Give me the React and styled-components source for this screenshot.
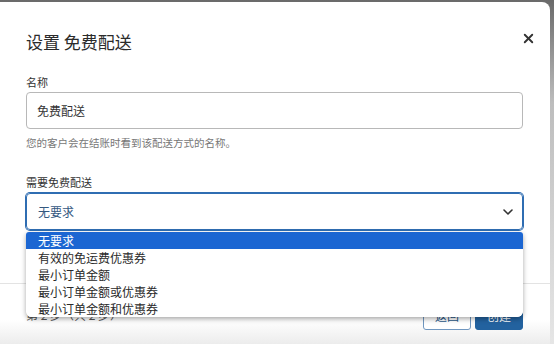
import React, { useState } from 'react';
import styled, { createGlobalStyle } from 'styled-components';
import { X, ChevronDown } from 'lucide-react';

const GlobalStyle = createGlobalStyle`
  body {
    margin: 0;
    background: linear-gradient(180deg, #6a6a6a 0%, #bdbdbd 30%, #e6e6e6 100%);
    font-family: "Noto Sans CJK SC", "Noto Sans", sans-serif;
    overflow: hidden;
  }
`;

const options = ['无要求', '有效的免运费优惠券', '最小订单金额', '最小订单金额或优惠券', '最小订单金额和优惠券'];

const App = () => {
  const [name, setName] = useState('免费配送');
  const [selected] = useState(0);

  return (
    <>
      <GlobalStyle />
      <Modal>
        <Header>
          <Title>设置 免费配送</Title>
          <CloseButton aria-label="关闭">
            <X size={15} strokeWidth={3} />
          </CloseButton>
        </Header>

        <Body>
          <Label>名称</Label>
          <Input value={name} onChange={(e) => setName(e.target.value)} />
          <Help>您的客户会在结账时看到该配送方式的名称。</Help>

          <Label $top={24}>需要免费配送</Label>
          <SelectWrap>
            <SelectBox>
              <span>{options[selected]}</span>
              <ChevronDown size={16} strokeWidth={2.4} color="#333" />
            </SelectBox>
            <OptionList>
              {options.map((o, i) => (
                <Option key={o} $active={i === selected}>{o}</Option>
              ))}
            </OptionList>
          </SelectWrap>
        </Body>

        <Footer>
          <StepText>第 2 步（共 2 步）</StepText>
          <Actions>
            <Button>返回</Button>
            <Button $primary>创建</Button>
          </Actions>
        </Footer>
      </Modal>
    </>
  );
};

const Modal = styled.div`
  width: 550px;
  height: 342px;
  margin-top: 2px;
  background: #fff;
  border-top-right-radius: 8px;
  display: flex;
  flex-direction: column;
`;

const Header = styled.div`
  display: flex;
  justify-content: space-between;
  align-items: flex-start;
  padding: 30px 14px 0 26px;
`;

const Title = styled.h2`
  margin: 0;
  font-size: 17px;
  line-height: 20px;
  font-weight: 400;
  color: #2b2b2b;
`;

const CloseButton = styled.button`
  border: none;
  background: none;
  padding: 0;
  margin-top: -1px;
  width: 15px;
  height: 15px;
  color: #333;
  display: flex;
  cursor: pointer;
`;

const Body = styled.div`
  padding: 0 27px 0 26px;
  display: flex;
  flex-direction: column;
  flex: 0 0 231px;
`;

const Label = styled.div`
  margin-top: ${(p) => p.$top ?? 22}px;
  margin-bottom: 2px;
  font-size: 11px;
  line-height: 16px;
  color: #333;
`;

const Input = styled.input`
  box-sizing: border-box;
  height: 37px;
  width: 100%;
  border: 1px solid #b8b8b8;
  border-radius: 4px;
  padding: 0 10px;
  font-family: inherit;
  font-size: 12px;
  color: #333;
  outline: none;
`;

const Help = styled.div`
  margin-top: 7px;
  font-size: 10.5px;
  line-height: 14px;
  color: #777;
`;

const SelectWrap = styled.div`
  position: relative;
  margin-top: 1px;
`;

const SelectBox = styled.div`
  box-sizing: border-box;
  height: 37px;
  display: flex;
  align-items: center;
  justify-content: space-between;
  padding: 0 6px 0 11px;
  border: 1px solid #2f6db2;
  box-shadow: 0 0 0 1px #2f6db2;
  border-radius: 4px;
  font-size: 12px;
  color: #34587f;
`;

const OptionList = styled.ul`
  position: absolute;
  top: calc(100% + 2px);
  left: 0;
  right: 0;
  margin: 0;
  padding: 0;
  list-style: none;
  background: #fff;
  border-radius: 3px 3px 6px 6px;
  overflow: hidden;
  box-shadow: 0 2px 5px rgba(0, 0, 0, 0.35);
  z-index: 2;
`;

const Option = styled.li`
  height: 17px;
  line-height: 17px;
  padding-left: 12px;
  font-size: 12px;
  color: ${(p) => (p.$active ? '#fff' : '#2a2a2a')};
  background: ${(p) => (p.$active ? '#1b66d2' : '#fff')};
`;

const Footer = styled.div`
  flex: 1;
  border-top: 1px solid #e3e3e3;
  padding: 16px 27px 0 26px;
  display: flex;
  justify-content: space-between;
  align-items: flex-start;
  background: linear-gradient(180deg, #fff 0%, #fff 60%, #ececec 100%);
`;

const StepText = styled.div`
  margin-top: 8px;
  font-size: 12px;
  line-height: 14px;
  color: #555;
`;

const Actions = styled.div`
  display: flex;
  gap: 4px;
`;

const Button = styled.button`
  box-sizing: border-box;
  width: 48px;
  height: 30px;
  border-radius: 3px;
  font-family: inherit;
  font-size: 12px;
  border: 1px solid ${(p) => (p.$primary ? '#23629f' : '#7097c0')};
  background: ${(p) => (p.$primary ? '#23629f' : '#fff')};
  color: ${(p) => (p.$primary ? '#fff' : '#2a5a8c')};
  cursor: pointer;
`;

export default App;
